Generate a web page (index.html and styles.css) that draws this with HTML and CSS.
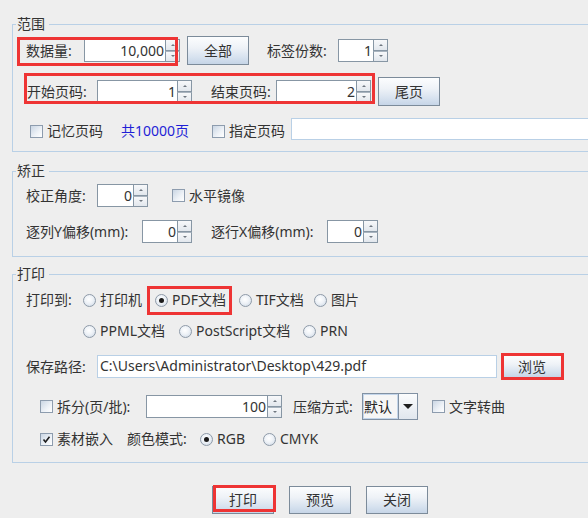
FILE: index.html
```html
<!DOCTYPE html>
<html lang="zh-CN">
<head>
<meta charset="utf-8">
<title>打印</title>
<link rel="stylesheet" href="styles.css">
</head>
<body>
<div class="dialog">

  <fieldset class="group g-range">
    <legend>范围</legend>
    <div class="row r-count">
      <span class="lbl w58">数据量:</span>
      <span class="spin"><span class="spin-field f81">10,000</span><span class="spin-btns"><span class="arr up"></span><span class="arr dn"></span></span></span>
      <button class="btn ml7">全部</button>
      <span class="lbl w71 ml18">标签份数:</span>
      <span class="spin"><span class="spin-field f35">1</span><span class="spin-btns"><span class="arr up"></span><span class="arr dn"></span></span></span>
    </div>
    <div class="row r-pages">
      <span class="lbl w70">开始页码:</span>
      <span class="spin"><span class="spin-field f80">1</span><span class="spin-btns"><span class="arr up"></span><span class="arr dn"></span></span></span>
      <span class="lbl w65 ml19">结束页码:</span>
      <span class="spin"><span class="spin-field f80">2</span><span class="spin-btns"><span class="arr up"></span><span class="arr dn"></span></span></span>
      <button class="btn ml7">尾页</button>
    </div>
    <div class="row r-memo">
      <label class="chk-item w91"><span class="box"></span><span class="txt">记忆页码</span></label>
      <span class="total w91">共10000页</span>
      <label class="chk-item w79"><span class="box"></span><span class="txt">指定页码</span></label>
      <span class="field grow"></span>
    </div>
  </fieldset>

  <fieldset class="group g-fix">
    <legend>矫正</legend>
    <div class="row r-angle">
      <span class="lbl w71">校正角度:</span>
      <span class="spin"><span class="spin-field f36">0</span><span class="spin-btns"><span class="arr up"></span><span class="arr dn"></span></span></span>
      <label class="chk-item ml24"><span class="box"></span><span class="txt">水平镜像</span></label>
    </div>
    <div class="row r-offset">
      <span class="lbl w116">逐列Y偏移(mm):</span>
      <span class="spin"><span class="spin-field f35">0</span><span class="spin-btns"><span class="arr up"></span><span class="arr dn"></span></span></span>
      <span class="lbl w116 ml19">逐行X偏移(mm):</span>
      <span class="spin"><span class="spin-field f36">0</span><span class="spin-btns"><span class="arr up"></span><span class="arr dn"></span></span></span>
    </div>
  </fieldset>

  <fieldset class="group g-print">
    <legend>打印</legend>
    <div class="row r-target">
      <span class="lbl w57">打印到:</span>
      <label class="opt w72"><span class="radio"></span><span class="txt">打印机</span></label>
      <label class="opt w84"><span class="radio on"></span><span class="txt">PDF文档</span></label>
      <label class="opt w75"><span class="radio"></span><span class="txt">TIF文档</span></label>
      <label class="opt"><span class="radio"></span><span class="txt">图片</span></label>
    </div>
    <div class="row r-target2">
      <label class="opt w96"><span class="radio"></span><span class="txt">PPML文档</span></label>
      <label class="opt w124"><span class="radio"></span><span class="txt">PostScript文档</span></label>
      <label class="opt"><span class="radio"></span><span class="txt">PRN</span></label>
    </div>
    <div class="row r-path">
      <span class="lbl w71">保存路径:</span>
      <span class="field path">C:\Users\Administrator\Desktop\429.pdf</span>
      <button class="btn btn-sm ml5">浏览</button>
    </div>
    <div class="row r-split">
      <label class="chk-item w106"><span class="box"></span><span class="txt">拆分(页/批):</span></label>
      <span class="spin"><span class="spin-field f121">100</span><span class="spin-btns"><span class="arr up"></span><span class="arr dn"></span></span></span>
      <span class="lbl w69 ml11">压缩方式:</span>
      <span class="combo"><span class="combo-text">默认</span><span class="combo-btn"><span class="tri"></span></span></span>
      <label class="chk-item ml14"><span class="box"></span><span class="txt">文字转曲</span></label>
    </div>
    <div class="row r-color">
      <label class="chk-item w87"><span class="box on"><svg viewBox="0 0 11 11" width="11" height="11"><path d="M2.5 5.5 L4.5 8 L8.5 2.8" fill="none" stroke="#1e1e1e" stroke-width="1.6"/></svg></span><span class="txt">素材嵌入</span></label>
      <span class="lbl w73">颜色模式:</span>
      <label class="opt w63"><span class="radio on"></span><span class="txt">RGB</span></label>
      <label class="opt"><span class="radio"></span><span class="txt">CMYK</span></label>
    </div>
  </fieldset>

  <div class="actions">
    <button class="btn">打印</button>
    <button class="btn">预览</button>
    <button class="btn">关闭</button>
  </div>

  <span class="mark m-count"></span>
  <span class="mark m-pages"></span>
  <span class="mark m-pdf"></span>
  <span class="mark m-browse"></span>
  <span class="mark m-print"></span>
</div>
</body>
</html>
```

FILE: styles.css
```css
* { box-sizing: border-box; }
html, body { margin: 0; padding: 0; }
body {
  background: #eeeeee;
  font-family: "Noto Sans", "Noto Sans CJK SC", sans-serif;
  font-size: 14px;
  color: #333;
}

.dialog {
  position: relative;
  width: 588px;
  height: 518px;
  overflow: hidden;
  padding-top: 16px;
}

/* titled groups */
.group {
  margin: 0 -40px 0 12px;
  padding: 0;
  border: 1px solid #b9d0e6;
  min-width: 0;
}
.group legend {
  margin-left: 3px;
  padding: 0 4px 0 1px;
  height: 16px;
  line-height: 16px;
}
.g-range { padding: 4px 0 11px 0; }
.g-fix { margin-top: 11px; padding: 5px 0 13px 0; }
.g-print { margin-top: 9px; padding: 7px 0 12px 0; }

.row { display: flex; align-items: center; white-space: nowrap; }
.r-count { height: 29px; padding-left: 13px; }
.r-pages { height: 29px; padding-left: 14px; margin-top: 12px; }
.r-memo { height: 22px; padding-left: 17px; margin-top: 12px; }
.r-memo .chk-item, .r-memo .total { padding-top: 4px; }
.r-angle { height: 23px; padding-left: 13px; }
.r-offset { height: 23px; padding-left: 13px; margin-top: 13px; }
.r-target { height: 22px; padding-left: 13px; }
.r-target2 { height: 22px; padding-left: 70px; margin-top: 9px; }
.r-path { height: 23px; padding-left: 13px; margin-top: 13px; }
.r-split { height: 27px; padding-left: 27px; margin-top: 15px; }
.r-color { height: 22px; padding-left: 27px; margin-top: 8px; }

.lbl { flex: none; line-height: 16px; }
.txt { line-height: 16px; }

/* fixed widths and spacing */
.w57 { width: 57px; } .w58 { width: 58px; } .w63 { width: 63px; }
.w65 { width: 65px; } .w69 { width: 69px; } .w70 { width: 70px; }
.w71 { width: 71px; } .w72 { width: 72px; } .w73 { width: 73px; }
.w75 { width: 75px; } .w79 { width: 79px; } .w84 { width: 84px; }
.w87 { width: 87px; } .w91 { width: 91px; } .w96 { width: 96px; }
.w106 { width: 106px; } .w116 { width: 116px; } .w124 { width: 124px; }
.ml5 { margin-left: 5px; } .ml7 { margin-left: 7px; } .ml11 { margin-left: 11px; }
.ml14 { margin-left: 14px; } .ml18 { margin-left: 18px; } .ml19 { margin-left: 19px; }
.ml24 { margin-left: 24px; }
.grow { flex: 1; }

/* push buttons */
.btn {
  flex: none;
  width: 62px;
  height: 29px;
  padding: 0;
  border: 1px solid #7c8b9a;
  border-radius: 0;
  background: linear-gradient(#fcfdfe 0%, #eef2f7 40%, #d7e2ef 75%, #c6d5e7 100%);
  font: inherit;
  color: #333;
  line-height: 16px;
}
.btn-sm { width: 60px; height: 23px; }

/* spinners */
.spin { display: flex; flex: none; height: 23px; }
.spin-field {
  height: 23px;
  background: #fff;
  border: 1px solid #8796a4;
  border-right: none;
  text-align: right;
  padding-right: 1px;
  line-height: 21px;
  color: #333;
}
.f35 { width: 35px; } .f36 { width: 36px; } .f80 { width: 80px; }
.f81 { width: 81px; } .f121 { width: 121px; }
.spin-btns { display: flex; flex-direction: column; width: 15px; }
.arr {
  flex: 1;
  display: flex;
  align-items: center;
  justify-content: center;
  border: 1px solid #8796a4;
  background: linear-gradient(#f7f8fa, #e2e7ed);
}
.arr.dn { border-top: 1px solid #a9b4bf; }
.arr.up::after, .arr.dn::after {
  content: "";
  border-left: 2px solid transparent;
  border-right: 2px solid transparent;
}
.arr.up::after { border-bottom: 2px solid #6f7780; }
.arr.dn::after { border-top: 2px solid #6f7780; }

/* text fields */
.field {
  height: 22px;
  background: #fff;
  border: 1px solid #b9d0e6;
  line-height: 20px;
  padding-left: 2px;
}
.path { width: 400px; height: 23px; flex: none; }
.r-memo .grow { margin-left: 0; }

/* check boxes */
.chk-item { display: flex; align-items: center; flex: none; }
.box {
  width: 13px;
  height: 13px;
  border: 1px solid #8d9cae;
  background: linear-gradient(135deg, #cad6e4 0%, #eef2f7 60%, #ffffff 100%);
  margin-right: 4px;
  display: flex;
  align-items: center;
  justify-content: center;
}
.box svg { display: block; }
.total { color: #1f1fd6; line-height: 16px; flex: none; }

/* radio buttons */
.opt { display: flex; align-items: center; flex: none; }
.radio {
  position: relative;
  width: 13px;
  height: 13px;
  border-radius: 50%;
  border: 1px solid #8e9aa8;
  background: radial-gradient(circle at 45% 40%, #ffffff 0%, #eef2f7 45%, #c9d5e3 100%);
  margin-right: 4px;
  flex: none;
}
.radio.on::after {
  content: "";
  position: absolute;
  left: 3px;
  top: 3px;
  width: 5px;
  height: 5px;
  border-radius: 50%;
  background: #1b1b1b;
}

/* combo box */
.combo {
  display: flex;
  width: 56px;
  height: 27px;
  border: 1px solid #8191a3;
  flex: none;
}
.combo-text {
  width: 35px;
  background: #f6f6f6;
  box-shadow: inset 0 0 0 1px #c3d5ea;
  line-height: 25px;
  padding-left: 1px;
  color: #222;
}
.combo-btn {
  flex: 1;
  border-left: 1px solid #8191a3;
  background: linear-gradient(#fbfcfd, #e1e7ee);
  display: flex;
  align-items: center;
  justify-content: center;
}
.tri {
  border-left: 5px solid transparent;
  border-right: 5px solid transparent;
  border-top: 5px solid #1f1f1f;
}

/* dialog buttons */
.actions { display: flex; gap: 15px; padding-left: 212px; margin-top: 23px; }
.actions .btn { height: 28px; }

/* red highlight frames drawn over the form */
.mark {
  position: absolute;
  border: 3px solid #ee3434;
  pointer-events: none;
}
.m-count { left: 17px; top: 37px; width: 161px; height: 29px; }
.m-pages { left: 24px; top: 73px; width: 351px; height: 31px; }
.m-pdf { left: 147px; top: 286px; width: 85px; height: 29px; }
.m-browse { left: 501px; top: 353px; width: 63px; height: 27px; }
.m-print { left: 213px; top: 485px; width: 63px; height: 27px; }
```
